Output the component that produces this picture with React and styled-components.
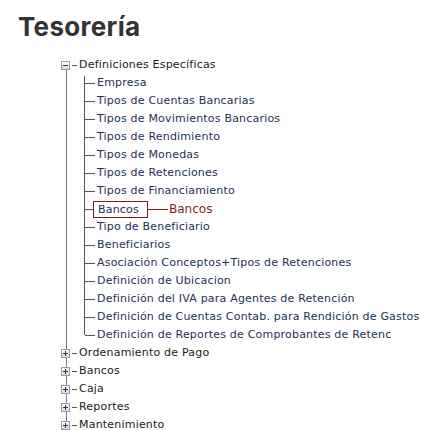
import React from "react";
import styled, { createGlobalStyle } from "styled-components";

const GlobalStyle = createGlobalStyle`
  html, body { margin: 0; padding: 0; background: #fff; }
  body { font-family: "DejaVu Sans", Verdana, sans-serif; }
`;

const Page = styled.div`
  width: 434px;
  height: 430px;
  overflow: hidden;
  background: #fff;
  padding-top: 1px;
  box-sizing: border-box;
`;

const Title = styled.h1`
  margin: 13px 0 0;
  padding-left: 18px;
  font-family: Inter, "Open Sans", sans-serif;
  font-weight: 700;
  font-size: 26px;
  line-height: 26px;
  letter-spacing: 0.3px;
  color: #333;
`;

const Tree = styled.ul`
  position: relative;
  list-style: none;
  margin: 16px 0 0 61px;
  padding: 0;
  &::before {
    content: "";
    position: absolute;
    left: 5px;
    top: 9px;
    bottom: 9px;
    width: 1px;
    background: #7d7d7d;
  }
`;

const TopItem = styled.li`
  margin: 0;
  padding: 0;
`;

const Row = styled.div`
  display: flex;
  align-items: center;
  height: 18px;
`;

const Toggle = styled.span`
  position: relative;
  z-index: 1;
  width: 9px;
  height: 9px;
  box-sizing: border-box;
  border: 1px solid #939ea8;
  background: linear-gradient(#ffffff, #d9d9d9);
  display: flex;
  align-items: center;
  justify-content: center;
  svg { display: block; }
`;

const Dash = styled.span`
  width: 5px;
  height: 1px;
  margin: 0 2px;
  background: #555;
`;

const TopLabel = styled.span`
  font-size: 11px;
  line-height: 18px;
  letter-spacing: 0.2px;
  color: #1a1a1a;
  white-space: nowrap;
`;

const Children = styled.ul`
  position: relative;
  list-style: none;
  margin: 0 0 0 23px;
  padding: 0;
  &::before {
    content: "";
    position: absolute;
    left: 0;
    top: 2px;
    bottom: 9px;
    width: 1px;
    background: #555;
  }
`;

const ChildItem = styled.li`
  display: flex;
  align-items: center;
  height: 18px;
  padding-left: 1px;
  white-space: nowrap;
`;

const Connector = styled.span`
  flex: none;
  width: ${(p) => p.$w || 10}px;
  height: 1px;
  background: ${(p) => p.$color || "#555"};
`;

const ChildLabel = styled.span`
  margin-left: 2px;
  font-size: 11px;
  line-height: 18px;
  letter-spacing: 0.2px;
  color: #1c3254;
`;

const HighlightBox = styled.span`
  box-sizing: border-box;
  width: 55px;
  height: 17px;
  border: 1px solid #7a1f1f;
  padding-left: 4px;
  display: flex;
  align-items: center;
  font-size: 11px;
  letter-spacing: 0.2px;
  color: #1c3254;
`;

const Annotation = styled.span`
  margin-left: 1px;
  font-size: 12px;
  color: #7a1f1f;
`;

const ToggleIcon = ({ open }) => (
  <Toggle>
    <svg width="7" height="7" viewBox="0 0 7 7">
      <path d="M1 3.5h5" stroke="#333" strokeWidth="1" />
      {!open && <path d="M3.5 1v5" stroke="#333" strokeWidth="1" />}
    </svg>
  </Toggle>
);

const children = [
  "Empresa",
  "Tipos de Cuentas Bancarias",
  "Tipos de Movimientos Bancarios",
  "Tipos de Rendimiento",
  "Tipos de Monedas",
  "Tipos de Retenciones",
  "Tipos de Financiamiento",
  "__BANCOS__",
  "Tipo de Beneficiario",
  "Beneficiarios",
  "Asociación Conceptos+Tipos de Retenciones",
  "Definición de Ubicacion",
  "Definición del IVA para Agentes de Retención",
  "Definición de Cuentas Contab. para Rendición de Gastos",
  "Definición de Reportes de Comprobantes de Retenc",
];

const others = ["Ordenamiento de Pago", "Bancos", "Caja", "Reportes", "Mantenimiento"];

export default function App() {
  return (
    <Page>
      <GlobalStyle />
      <Title>Tesorería</Title>
      <Tree>
        <TopItem>
          <Row>
            <ToggleIcon open />
            <Dash />
            <TopLabel>Definiciones Específicas</TopLabel>
          </Row>
          <Children>
            {children.map((c) =>
              c === "__BANCOS__" ? (
                <ChildItem key={c}>
                  <Connector $w={8} />
                  <HighlightBox>Bancos</HighlightBox>
                  <Connector $w={20} $color="#7a1f1f" />
                  <Annotation>Bancos</Annotation>
                </ChildItem>
              ) : (
                <ChildItem key={c}>
                  <Connector />
                  <ChildLabel>{c}</ChildLabel>
                </ChildItem>
              )
            )}
          </Children>
        </TopItem>
        {others.map((o) => (
          <TopItem key={o}>
            <Row>
              <ToggleIcon />
              <Dash />
              <TopLabel>{o}</TopLabel>
            </Row>
          </TopItem>
        ))}
      </Tree>
    </Page>
  );
}
